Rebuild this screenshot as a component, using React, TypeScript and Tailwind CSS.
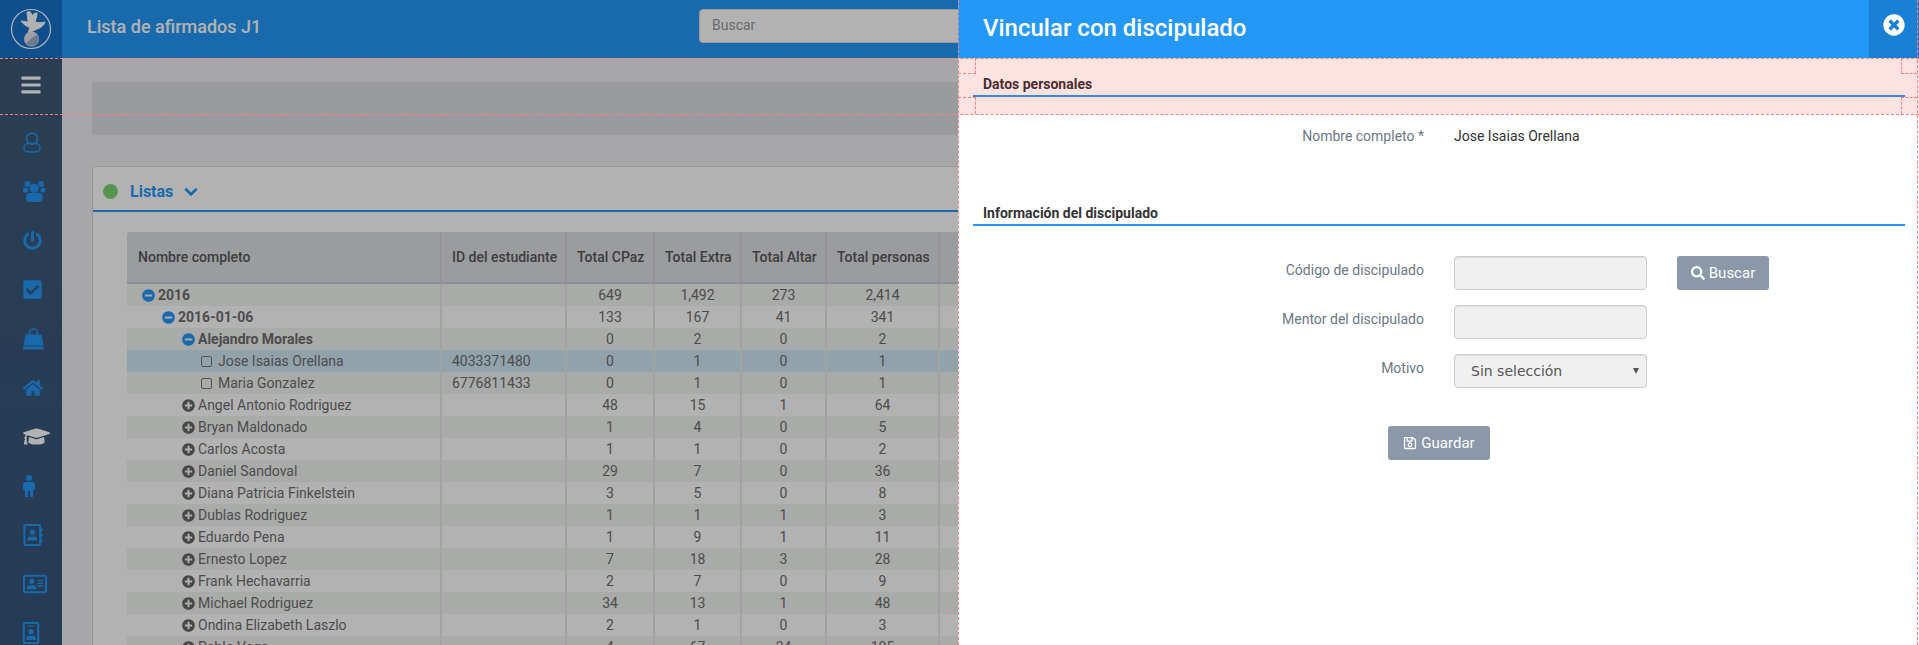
import React from "react";
import {
  FaBars,
  FaPowerOff,
  FaCheckSquare,
  FaHome,
  FaGraduationCap,
  FaRegAddressBook,
  FaRegAddressCard,
  FaRegIdBadge,
  FaChevronDown,
  FaMinusCircle,
  FaPlusCircle,
  FaTimesCircle,
  FaSearch,
  FaRegSave,
} from "react-icons/fa";

type Row = {
  name: string;
  level: 0 | 1 | 2 | 3;
  open?: boolean;
  id?: string;
  cells: string[];
};

const rows: Row[] = [
  { name: "2016", level: 0, open: true, cells: ["649", "1,492", "273", "2,414"] },
  { name: "2016-01-06", level: 1, open: true, cells: ["133", "167", "41", "341"] },
  { name: "Alejandro Morales", level: 2, open: true, cells: ["0", "2", "0", "2"] },
  { name: "Jose Isaias Orellana", level: 3, id: "4033371480", cells: ["0", "1", "0", "1"] },
  { name: "Maria Gonzalez", level: 3, id: "6776811433", cells: ["0", "1", "0", "1"] },
  { name: "Angel Antonio Rodriguez", level: 2, cells: ["48", "15", "1", "64"] },
  { name: "Bryan Maldonado", level: 2, cells: ["1", "4", "0", "5"] },
  { name: "Carlos Acosta", level: 2, cells: ["1", "1", "0", "2"] },
  { name: "Daniel Sandoval", level: 2, cells: ["29", "7", "0", "36"] },
  { name: "Diana Patricia Finkelstein", level: 2, cells: ["3", "5", "0", "8"] },
  { name: "Dublas Rodriguez", level: 2, cells: ["1", "1", "1", "3"] },
  { name: "Eduardo Pena", level: 2, cells: ["1", "9", "1", "11"] },
  { name: "Ernesto Lopez", level: 2, cells: ["7", "18", "3", "28"] },
  { name: "Frank Hechavarria", level: 2, cells: ["2", "7", "0", "9"] },
  { name: "Michael Rodriguez", level: 2, cells: ["34", "13", "1", "48"] },
  { name: "Ondina Elizabeth Laszlo", level: 2, cells: ["2", "1", "0", "3"] },
  { name: "Pablo Vega", level: 2, cells: ["4", "67", "34", "105"] },
];

const indents = ["pl-[15px]", "pl-[35px]", "pl-[55px]", "pl-[74px]"];

function Logo() {
  return (
    <svg width="42" height="42" viewBox="0 0 42 42">
      <circle cx="21" cy="21" r="19.5" fill="none" stroke="#fff" strokeWidth="1.2" />
      <path
        d="M17 4C19 3 22 4 22 8C23 6 25 5 27 5C27 8 26 11 25 14C28 15 32 15 35 14C34 17 31 20 27 21C24 23 20 24 18 25C19 22 20 21 19 19C16 18 13 16 11 13C13 13 15 14 18 14C18 10 17 7 17 4z"
        fill="#fff"
        stroke="#fff"
        strokeWidth="1"
      />
      <circle cx="21.5" cy="31" r="7.5" fill="#dfe6ec" />
      <path d="M16 36c3-4 7-8 12-9 2 4 0 9-3 10-3 1-6 1-9-1z" fill="#9db2c6" />
    </svg>
  );
}

function OutlineUser() {
  return (
    <svg width="18" height="21" viewBox="0 0 18 21" fill="none" stroke="#2498f7" strokeWidth="1.5">
      <circle cx="9" cy="6.5" r="5.5" />
      <rect x="1" y="11.5" width="16" height="8.5" rx="4" />
    </svg>
  );
}

function Group() {
  return (
    <svg width="23" height="21" viewBox="0 0 23 21" fill="#2498f7">
      <circle cx="4.5" cy="3" r="3" />
      <circle cx="18" cy="3" r="3" />
      <circle cx="11.2" cy="7.3" r="4.5" />
      <circle cx="2.6" cy="9" r="2.6" />
      <circle cx="20" cy="9" r="2.6" />
      <rect x="3" y="12" width="16.7" height="9" rx="4" />
    </svg>
  );
}

function Bag() {
  return (
    <svg width="21" height="22" viewBox="0 0 21 22" fill="#2498f7">
      <path d="M6.5 9V5a4 4 0 0 1 8 0v4" fill="none" stroke="#2498f7" strokeWidth="1.5" />
      <path d="M2.5 6.5h16l2 11H.5z" />
      <path d="M.4 18.2h20.2l.4 3.3H0z" />
    </svg>
  );
}

function Person() {
  return (
    <svg width="12" height="22" viewBox="0 0 12 22" fill="#2498f7">
      <circle cx="6" cy="3" r="3" />
      <path d="M2 7h8a2 2 0 0 1 2 2v6h-2v7H7v-6H5v6H2v-7H0V9a2 2 0 0 1 2-2z" />
    </svg>
  );
}

function Sidebar() {
  const cls = "text-[#2498f7]";
  const icons = [
    <OutlineUser />,
    <Group />,
    <FaPowerOff size={19} className={cls} />,
    <FaCheckSquare size={21} className={`${cls} -ml-[1px]`} />,
    <Bag />,
    <FaHome size={20} className={cls} />,
    <FaGraduationCap size={27} className="text-white" />,
    <Person />,
    <FaRegAddressBook size={22} className={`${cls} -ml-[1px]`} />,
    <FaRegAddressCard size={24} className={cls} />,
    <FaRegIdBadge size={22} className={`${cls} -ml-[3px]`} />,
  ];
  return (
    <aside className="w-[62px] shrink-0 bg-gradient-to-b from-[#3e5a78] to-[#36567c] flex flex-col">
      <div className="h-[54px] mb-[6px] shrink-0 flex items-center justify-center">
        <FaBars size={22} className="text-white" />
      </div>
      {icons.map((icon, i) => (
        <div key={i} className="h-[49px] w-full flex items-center pl-[23px] shrink-0">
          {icon}
        </div>
      ))}
    </aside>
  );
}

function TreeTable() {
  return (
    <table className="table-fixed border-separate border-spacing-0 w-[1100px] text-[14px] leading-[22px] text-[#6e6e6e]">
      <colgroup>
        <col className="w-[315px]" />
        <col className="w-[125px]" />
        <col className="w-[88px]" />
        <col className="w-[87px]" />
        <col className="w-[85px]" />
        <col className="w-[113px]" />
        <col />
      </colgroup>
      <thead>
        <tr className="h-[52px] text-[#585858] font-medium">
          {["Nombre completo", "ID del estudiante", "Total CPaz", "Total Extra", "Total Altar", "Total personas", "Total"].map((h, i) => (
            <th
              key={h}
              className={`bg-[#dee0e4] border-b-2 border-r-2 border-b-[#cbccd1] border-r-[#d4d5da] align-top pt-[14px] font-medium whitespace-nowrap ${
                i === 0 ? "pl-[11px] rounded-tl-[3px] text-left" : i === 1 ? "pl-[10px] text-left" : "px-[10px] text-center"
              }`}
            >
              {h}
            </th>
          ))}
        </tr>
      </thead>
      <tbody>
        {rows.map((r, i) => {
          const bg = i === 3 ? "bg-[#d2e9f5]" : i % 2 === 0 ? "bg-[#f3f5f3]" : "bg-white";
          const base = `${bg} border-r-2 border-[#e8e8e8] h-[22px] p-0`;
          return (
            <tr key={r.name}>
              <td className={`${base} ${indents[r.level]}`}>
                <div className={`flex items-center ${r.open ? "font-bold" : ""}`}>
                  {r.level === 3 ? (
                    <span className="w-[11px] h-[11px] mr-[6px] border border-[#777] rounded-[2px]" />
                  ) : r.open ? (
                    <FaMinusCircle size={13} className="text-[#2498f7] mr-[3px]" />
                  ) : (
                    <FaPlusCircle size={13} className="text-[#666] mr-[3px]" />
                  )}
                  <span>{r.name}</span>
                </div>
              </td>
              <td className={`${base} pl-[10px]`}>{r.id}</td>
              {r.cells.map((c, j) => (
                <td key={j} className={`${base} text-center`}>
                  {c}
                </td>
              ))}
              <td className={base} />
            </tr>
          );
        })}
      </tbody>
    </table>
  );
}

function SectionTitle({ children }: { children: React.ReactNode }) {
  return (
    <div className="border-b-2 border-[#2498f7] h-[20px] pl-[10px] text-[14px] leading-[14px] font-bold text-[#333]">
      {children}
    </div>
  );
}

function FormLabel({ children }: { children: React.ReactNode }) {
  return <label className="w-[451px] text-right text-[14px] leading-[20px] pt-[4px] text-[#6b7785]">{children}</label>;
}

const fieldClass =
  "ml-[30px] w-[193px] h-[34px] bg-[#f0f0f0] border border-[#ccc] rounded-[4px] shadow-[inset_0_1px_1px_rgba(0,0,0,0.075)]";

function Panel() {
  return (
    <div className="absolute top-0 bottom-0 right-0 w-[961px] bg-white">
      <div className="h-[58px] bg-[#2498f7] flex items-center justify-between pl-[25px]">
        <h1 className="text-[24px] font-medium text-white pb-[2px]">Vincular con discipulado</h1>
        <div className="w-[50px] h-[58px] bg-[#1a80d6] flex justify-center pt-[14px]">
          <FaTimesCircle size={22} className="text-white" />
        </div>
      </div>

      <div className="pl-[15px] pr-[14px]">
        <div className="pt-[19px]">
          <SectionTitle>Datos personales</SectionTitle>
        </div>
        <div className="flex mt-[29px] text-[14px] leading-[20px]">
          <div className="w-[451px] text-right text-[#6b7785]">Nombre completo *</div>
          <div className="ml-[30px] text-[#333]">Jose Isaias Orellana</div>
        </div>
        <div className="mt-[60px]">
          <SectionTitle>Información del discipulado</SectionTitle>
        </div>

        <div className="flex flex-col gap-[15px] mt-[30px]">
          <div className="flex">
            <FormLabel>Código de discipulado</FormLabel>
            <input className={fieldClass} />
            <button className="ml-[30px] w-[92px] h-[34px] bg-[#8a98a9] rounded-[3px] text-white text-[15px] flex items-center justify-center gap-[4px]">
              <FaSearch size={14} /> Buscar
            </button>
          </div>
          <div className="flex">
            <FormLabel>Mentor del discipulado</FormLabel>
            <input className={fieldClass} />
          </div>
          <div className="flex">
            <FormLabel>Motivo</FormLabel>
            <div className={`relative ${fieldClass}`}>
              <select className="appearance-none w-full h-full pl-[16px] pt-[1px] text-[14px] text-[#555] font-['DejaVu_Sans',sans-serif]">
                <option>Sin selección</option>
              </select>
              <svg className="absolute right-[7px] top-[13px]" width="6" height="6" viewBox="0 0 6 6" fill="#555">
                <path d="M0 0h6L3 6z" />
              </svg>
            </div>
          </div>
        </div>

        <button className="block ml-[415px] mt-[38px] w-[102px] h-[34px] bg-[#8a98a9] rounded-[3px] text-white text-[15px]">
          <span className="flex items-center justify-center gap-[4px]">
            <FaRegSave size={14} /> Guardar
          </span>
        </button>
      </div>

      {/* tinted guide band over the first section */}
      <div className="absolute top-[58px] left-0 right-0 h-[56px] bg-[#ff0000]/[0.11]">
        <div className="absolute left-0 top-0 w-[18px] h-[16px] border-r border-b border-dashed border-[#ff7f7f]" />
        <div className="absolute right-[2px] top-0 w-[16px] h-[16px] border-l border-b border-dashed border-[#ff7f7f]" />
        <div className="absolute left-0 bottom-0 w-[18px] h-[17px] border-r border-t border-dashed border-[#ff7f7f]" />
        <div className="absolute right-[2px] bottom-0 w-[16px] h-[17px] border-l border-t border-dashed border-[#ff7f7f]" />
      </div>
    </div>
  );
}

export default function App() {
  return (
    <div className="relative h-screen overflow-hidden flex flex-col bg-[#eff0f2] font-[Roboto,sans-serif]">
      <header className="h-[58px] shrink-0 flex bg-[#2498f7]">
        <div className="w-[62px] bg-[#1772cc] flex items-center justify-center">
          <Logo />
        </div>
        <div className="ml-[25px] text-[18px] font-medium text-white leading-[53px]">Lista de afirmados J1</div>
        <div className="absolute left-[699px] top-[9px] w-[500px] h-[34px] bg-white rounded-[4px] border border-[#ddd] pl-[12px] text-[14px] leading-[30px] text-[#999]">
          Buscar
        </div>
      </header>

      <div className="flex flex-1 min-h-0">
        <Sidebar />
        <main className="flex-1 pl-[30px] pt-[24px]">
          <div className="h-[53px] w-[1700px] bg-[#dcdee0] rounded-[3px]" />
          <div className="mt-[31px] w-[1700px] bg-white border border-[#d8d8d8] rounded-t-[3px]">
            <div className="h-[45px] flex items-center pl-[10px] pt-[6px] border-b-2 border-[#2498f7]">
              <span className="w-[15px] h-[15px] rounded-full bg-[#7cd672]" />
              <span className="ml-[12px] text-[16px] font-bold text-[#2498f7]">Listas</span>
              <FaChevronDown size={14} className="ml-[11px] text-[#2498f7] stroke-[30]" />
            </div>
            <div className="pl-[34px] pt-[20px]">
              <TreeTable />
            </div>
          </div>
        </main>
      </div>

      {/* modal backdrop */}
      <div className="absolute inset-0 bg-black/30" />
      <Panel />

      {/* layout guides */}
      <div className="absolute left-0 right-0 top-[58px] border-t border-dashed border-[#ff7f7f]" />
      <div className="absolute left-0 right-0 top-[114px] border-t border-dashed border-[#ff7f7f]" />
      <div className="absolute left-[958px] top-0 bottom-0 border-l border-dashed border-[#ff7f7f]" />
      <div className="absolute left-[1917px] top-0 bottom-0 border-l border-dashed border-[#ff7f7f]" />
    </div>
  );
}
